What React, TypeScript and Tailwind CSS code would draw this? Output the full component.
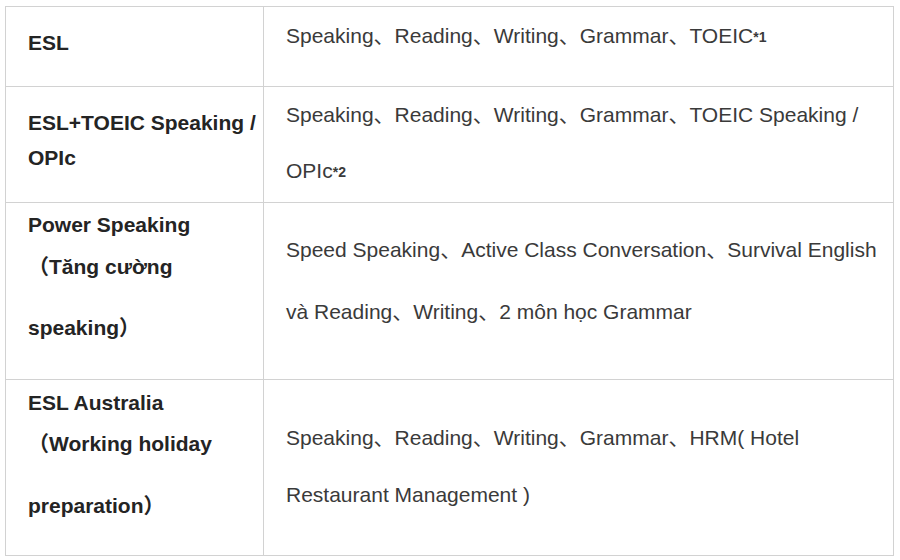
import type { ReactNode } from "react";

type Line = { text: ReactNode; cls: string };
type Row = { cls: string; left: { pt: string; lines: Line[] }; right: { pt: string; lines: Line[] } };

const Sup = ({ children }: { children: ReactNode }) => (
  <sup className="text-[14px] font-bold relative -top-[1px]">{children}</sup>
);

// each row spelled out: heights, paddings and per-line spacing read from the screenshot
const rows: Row[] = [
  {
    cls: "h-[79px]",
    left: { pt: "pt-[21px]", lines: [{ text: "ESL", cls: "h-[30px] leading-[30px]" }] },
    right: {
      pt: "pt-[14px]",
      lines: [
        { text: <>Speaking、Reading、Writing、Grammar、TOEIC<Sup>*1</Sup></>, cls: "h-[30px] leading-[30px]" },
      ],
    },
  },
  {
    cls: "h-[116px] border-t",
    left: {
      pt: "pt-[18px]",
      lines: [
        { text: "ESL+TOEIC Speaking /", cls: "h-[35px] leading-[35px]" },
        { text: "OPIc", cls: "h-[35px] leading-[35px]" },
      ],
    },
    right: {
      pt: "pt-0",
      lines: [
        { text: "Speaking、Reading、Writing、Grammar、TOEIC Speaking /", cls: "h-[56px] leading-[56px]" },
        { text: <>OPIc<Sup>*2</Sup></>, cls: "h-[56px] leading-[56px]" },
      ],
    },
  },
  {
    cls: "h-[177px] border-t",
    left: {
      pt: "pt-[7px]",
      lines: [
        { text: "Power Speaking", cls: "h-[30px] leading-[30px]" },
        { text: "（Tăng cường", cls: "h-[30px] leading-[30px] mt-[12px]" },
        { text: "speaking）", cls: "h-[30px] leading-[30px] mt-[31px]" },
      ],
    },
    right: {
      pt: "pt-[16px]",
      lines: [
        { text: "Speed Speaking、Active Class Conversation、Survival English", cls: "h-[62px] leading-[62px]" },
        { text: "và Reading、Writing、2 môn học Grammar", cls: "h-[62px] leading-[62px]" },
      ],
    },
  },
  {
    cls: "h-[176px] border-t",
    left: {
      pt: "pt-[8px]",
      lines: [
        { text: "ESL Australia", cls: "h-[30px] leading-[30px]" },
        { text: "（Working holiday", cls: "h-[30px] leading-[30px] mt-[11px]" },
        { text: "preparation）", cls: "h-[30px] leading-[30px] mt-[32px]" },
      ],
    },
    right: {
      pt: "pt-[29px]",
      lines: [
        { text: "Speaking、Reading、Writing、Grammar、HRM( Hotel", cls: "h-[57px] leading-[57px]" },
        { text: "Restaurant Management )", cls: "h-[57px] leading-[57px]" },
      ],
    },
  },
];

export default function App() {
  return (
    <div className="w-[900px] h-[560px] bg-white overflow-hidden pt-[6px] pl-[5px] font-['Liberation_Sans',Arial,'Noto_Sans_CJK_SC',sans-serif]">
      <div className="w-[889px] border border-[#d2d2d2]">
        {rows.map((r, i) => (
          <div key={i} className={`flex border-[#d2d2d2] ${r.cls}`}>
            {/* course name */}
            <div className={`w-[258px] shrink-0 border-r border-[#d2d2d2] pl-[22px] ${r.left.pt}`}>
              {r.left.lines.map((l, j) => (
                <div key={j} className={`font-bold text-[21px] text-[#242424] whitespace-nowrap ${l.cls}`}>
                  {l.text}
                </div>
              ))}
            </div>
            {/* subjects */}
            <div className={`flex-1 pl-[22px] ${r.right.pt}`}>
              {r.right.lines.map((l, j) => (
                <div key={j} className={`text-[21px] text-[#3a3a3a] whitespace-nowrap ${l.cls}`}>
                  {l.text}
                </div>
              ))}
            </div>
          </div>
        ))}
      </div>
    </div>
  );
}
